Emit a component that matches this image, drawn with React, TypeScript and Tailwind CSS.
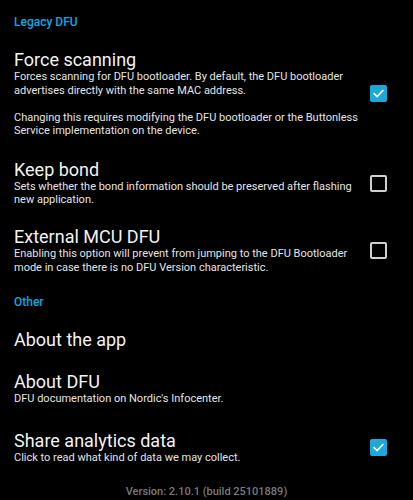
import React from "react";

function Check({ checked }: { checked: boolean }) {
  if (checked) {
    return (
      <div className="w-[17px] h-[17px] rounded-[2px] bg-[#1ca8d8] flex items-center justify-center shrink-0">
        <svg width="13" height="13" viewBox="0 0 13 13" fill="none">
          <path d="M2.2 6.8 L5.1 9.6 L10.8 3.6" stroke="#ffffff" strokeWidth="1.7" strokeLinecap="square" />
        </svg>
      </div>
    );
  }
  return <div className="w-[17px] h-[17px] rounded-[2px] border-2 border-[#cfcfcf] shrink-0" />;
}

function Header({ text, className }: { text: string; className: string }) {
  return (
    <div className={"pl-[14px] text-[12px] leading-[16px] text-[#0aa8e4] font-medium " + className}>{text}</div>
  );
}

function Item({
  title,
  desc,
  check,
  className,
}: {
  title: string;
  desc?: string;
  check?: boolean;
  className: string;
}) {
  return (
    <div className={"flex items-center pl-[14px] pr-[26px] " + className}>
      <div className="flex-1 min-w-0 pr-[4px]">
        <div className="text-[18px] leading-[20px] text-[#f2f2f2]">{title}</div>
        {desc && (
          <div className="text-[11px] leading-[13.5px] text-[#e4e4e4] whitespace-pre-line">{desc}</div>
        )}
      </div>
      {check !== undefined && <Check checked={check} />}
    </div>
  );
}

export default function App() {
  return (
    <div className="w-[413px] h-[500px] bg-black overflow-hidden" style={{ fontFamily: "Roboto, 'Noto Sans', sans-serif" }}>
      <Header text="Legacy DFU" className="pt-[13.5px]" />
      <Item
        className="mt-[20.5px]"
        title="Force scanning"
        desc={
          "Forces scanning for DFU bootloader. By default, the DFU bootloader advertises directly with the same MAC address.\n\nChanging this requires modifying the DFU bootloader or the Buttonless Service implementation on the device."
        }
        check={true}
      />
      <Item
        className="mt-[22px]"
        title="Keep bond"
        desc="Sets whether the bond information should be preserved after flashing new application."
        check={false}
      />
      <Item
        className="mt-[20.5px]"
        title="External MCU DFU"
        desc="Enabling this option will prevent from jumping to the DFU Bootloader mode in case there is no DFU Version characteristic."
        check={false}
      />
      <Header text="Other" className="mt-[19.5px]" />
      <Item className="mt-[20px]" title="About the app" />
      <Item className="mt-[22.5px]" title="About DFU" desc="DFU documentation on Nordic's Infocenter." />
      <Item
        className="mt-[25.5px]"
        title="Share analytics data"
        desc="Click to read what kind of data we may collect."
        check={true}
      />
      <div className="mt-[20.3px] text-center text-[11px] leading-[14px] text-[#7a7a7a] font-medium">
        Version: 2.10.1 (build 25101889)
      </div>
    </div>
  );
}
